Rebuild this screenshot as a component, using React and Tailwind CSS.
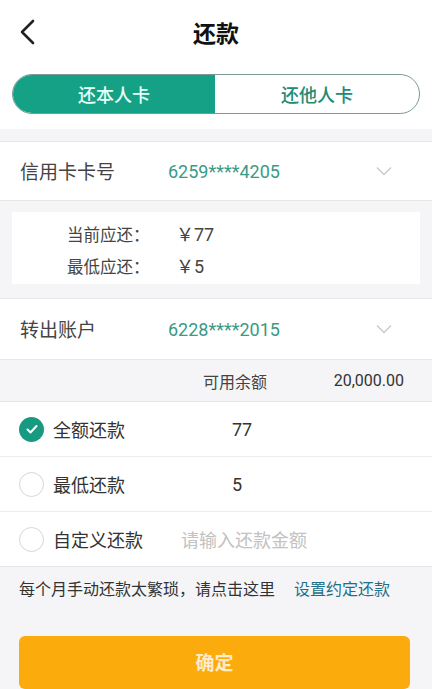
const Chevron = () => (
  <svg className="w-[16px] h-[10px]" viewBox="0 0 16 10" fill="none" stroke="#c8c8c8" strokeWidth="1.3">
    <path d="M1 1.5l7 7 7-7" />
  </svg>
)

const Radio = ({ checked }) =>
  checked ? (
    <span className="w-[25px] h-[25px] rounded-full bg-[#189a80] flex items-center justify-center">
      <svg className="w-[14px] h-[14px]" viewBox="0 0 14 14" fill="none" stroke="#fff" strokeWidth="2" strokeLinecap="round" strokeLinejoin="round">
        <path d="M2.5 7.5l3 3 6-6.5" />
      </svg>
    </span>
  ) : (
    <span className="w-[25px] h-[25px] rounded-full border border-[#d6d6d6] bg-white" />
  )

const cjk = "font-['Noto_Sans_CJK_SC',sans-serif]"
const num = "font-['Roboto','Noto_Sans_CJK_SC',sans-serif]"

const App = () => {
  return (
    <div className={`w-[432px] h-[689px] overflow-hidden bg-white ${cjk} text-[#333]`}>
      {/* header */}
      <div className="h-[64px] flex items-center relative">
        <svg className="absolute left-[19px] top-[19px] w-[17px] h-[26px]" viewBox="0 0 17 26" fill="none" stroke="#222" strokeWidth="2.6" strokeLinecap="round" strokeLinejoin="round">
          <path d="M14 2L3 13l11 11" />
        </svg>
        <div className="flex-1 text-center text-[23px] font-bold text-[#111] leading-none">还款</div>
      </div>

      {/* tabs */}
      <div className="px-[12px] pt-[10px] pb-[15px]">
        <div className="h-[40px] flex rounded-[20px] border border-[#7d9a92] overflow-hidden">
          <div className="w-[202px] bg-[#14a186] flex items-center justify-center text-[18px] font-medium text-[#e6fff7]">还本人卡</div>
          <div className="flex-1 flex items-center justify-center text-[18px] font-medium text-[#238a73]">还他人卡</div>
        </div>
      </div>

      <div className="h-[13px] bg-[#f5f5f7] border-b border-[#e6e6e6]" />

      {/* credit card */}
      <div className="h-[59px] flex items-center pl-[20px] pr-[40px] border-b border-[#e6e6e6]">
        <span className="w-[148px] text-[19px] text-[#444]">信用卡卡号</span>
        <span className={`flex-1 text-[18px] text-[#3a9a84] ${num}`}>6259****4205</span>
        <Chevron />
      </div>

      <div className="bg-[#f5f5f7] px-[12px] pt-[11px] pb-[14px] border-b border-[#e6e6e6]">
        <div className="bg-white pl-[55px] pt-[6px] pb-[2px] flex flex-col">
          <div className="h-[32px] flex items-center text-[16.5px] text-[#444]">
            <span className="w-[109px]">当前应还：</span>
            <span className={`text-[18px] ${num}`}>￥77</span>
          </div>
          <div className="h-[32px] flex items-center text-[16.5px] text-[#444]">
            <span className="w-[109px]">最低应还：</span>
            <span className={`text-[18px] ${num}`}>￥5</span>
          </div>
        </div>
      </div>

      {/* account */}
      <div className="h-[61px] flex items-center pl-[20px] pr-[40px] border-b border-[#e6e6e6]">
        <span className="w-[148px] text-[19px] text-[#444]">转出账户</span>
        <span className={`flex-1 text-[18px] text-[#3a9a84] ${num}`}>6228****2015</span>
        <Chevron />
      </div>

      <div className="h-[42px] bg-[#f5f5f7] flex items-center border-b border-[#e6e6e6] pr-[28px]">
        <span className="ml-[203px] text-[16px] text-[#444]">可用余额</span>
        <span className={`ml-auto text-[16px] text-[#333] ${num}`}>20,000.00</span>
      </div>

      {/* options */}
      <div className="h-[55px] flex items-center pl-[19px] border-b border-[#ececec]">
        <Radio checked />
        <span className="ml-[9px] w-[179px] text-[18px] text-[#333]">全额还款</span>
        <span className={`text-[18px] text-[#333] ${num}`}>77</span>
      </div>
      <div className="h-[55px] flex items-center pl-[19px] border-b border-[#ececec]">
        <Radio />
        <span className="ml-[9px] w-[179px] text-[18px] text-[#333]">最低还款</span>
        <span className={`text-[18px] text-[#333] ${num}`}>5</span>
      </div>
      <div className="h-[55px] flex items-center pl-[19px] border-b border-[#e6e6e6]">
        <Radio />
        <span className="ml-[9px] w-[128px] text-[18px] text-[#333]">自定义还款</span>
        <span className="text-[18px] text-[#c2c2c2]">请输入还款金额</span>
      </div>

      {/* footer */}
      <div className="bg-[#f5f5f7] h-[200px] px-[19px]">
        <div className="h-[42px] flex items-center text-[16px]">
          <span className="text-[#333]">每个月手动还款太繁琐，请点击这里</span>
          <span className="ml-[19px] text-[#1d6f8a]">设置约定还款</span>
        </div>
        <div className="mt-[27px] mr-[3px] h-[53px] rounded-[6px] bg-[#fcab0c] flex items-center justify-center text-[19px] font-bold text-[#fdeccb]">
          确定
        </div>
      </div>
    </div>
  )
}

export default App
